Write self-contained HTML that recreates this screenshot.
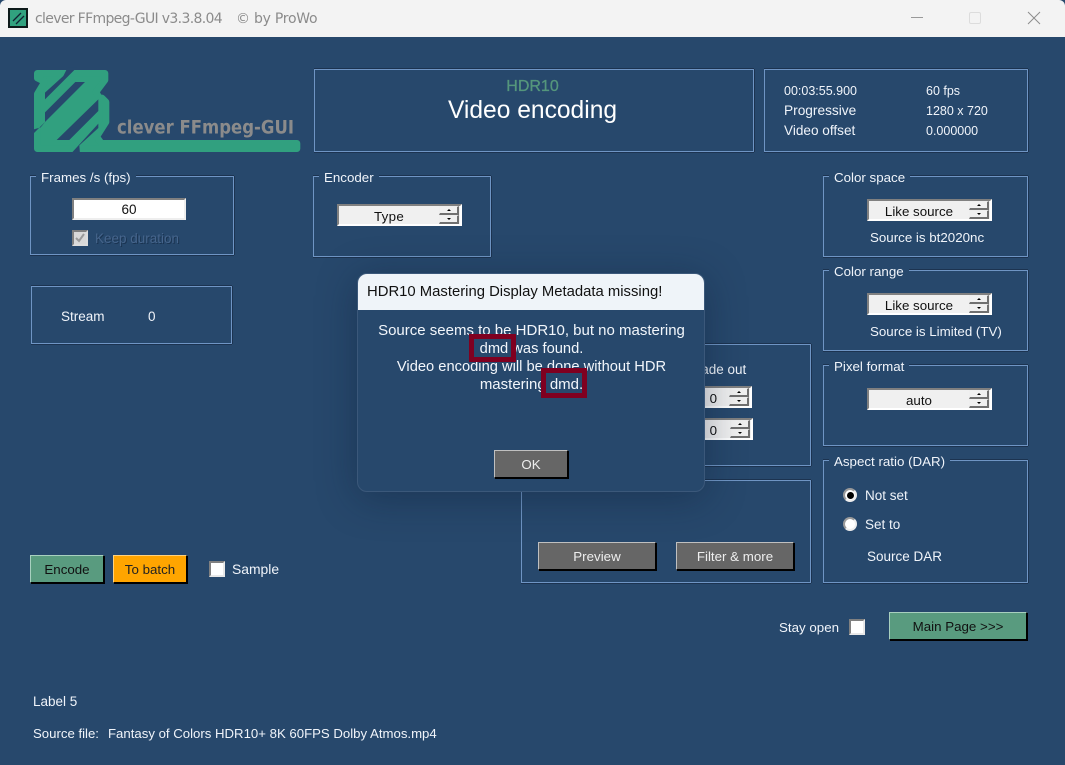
<!DOCTYPE html>
<html><head><meta charset="utf-8"><style>
*{box-sizing:border-box}
html,body{margin:0;padding:0;width:1065px;height:765px;overflow:hidden;background:#27486c}
body{position:relative;font-family:"Liberation Sans",sans-serif;font-size:13.5px;color:#f0f4fa}
.t{position:absolute;white-space:nowrap;line-height:16px}
.box{position:absolute;border:1px solid #6f95c4;box-shadow:0 -1px 0 #1c3350,1px 0 0 #1c3350,0 1px 0 #1c3350}
.leg{position:absolute;background:#27486c;padding:0 5px;line-height:16px;white-space:nowrap;top:-7px;left:5px;z-index:2;font-size:13.33px}
.spin{position:absolute;width:125px;height:22px;background:#f0f0f0;border:2px solid;border-color:#808080 #fff #fff #808080;color:#111;text-align:center;line-height:22px;padding-right:21px;font-size:13.33px}
.spin i{position:absolute;right:1px;width:20px;height:9px;background:#f0f0f0;border:1px solid;border-color:#eee #707070 #707070 #eee;border-right-width:2px;border-bottom-width:2px}
.spin i:after{content:"";position:absolute;left:7px;top:2px;border-left:2px solid transparent;border-right:2px solid transparent}
.spin i.u{top:0}.spin i.u:after{border-bottom:2px solid #000}
.spin i.d{top:9px}.spin i.d:after{border-top:2px solid #000}
.btn{position:absolute;height:28px;text-align:center;line-height:27px;border:1px solid;border-color:#c0c0c0 #000 #000 #c0c0c0;box-shadow:1px 1px 0 #000;background:#666;color:#eee;font-size:13.33px}
.btn.g{background:#599b7f;color:#111;border-color:#a8d0bf #000 #000 #a8d0bf}
.btn.o{background:#ffa500;color:#222;border-color:#ffd27f #000 #000 #ffd27f}
.chk{position:absolute;width:16px;height:16px;background:#fff;border:2px solid;border-color:#808080 #e8e8e8 #e8e8e8 #808080}
.rad{position:absolute;width:14px;height:14px;border-radius:50%;background:#fff;border:2px solid #999;border-right-color:#eee;border-bottom-color:#eee}
.red{position:absolute;border:5px solid #7f0020;z-index:30}
</style></head><body>

<!-- title bar -->
<div style="position:absolute;left:0;top:0;width:1065px;height:37px;background:#f3f3f3;border-radius:6px 6px 0 0"></div>
<svg style="position:absolute;left:8px;top:8px" width="20" height="20" viewBox="0 0 20 20">
<rect width="20" height="20" fill="#0d1a1a"/><rect x="2" y="2" width="16" height="16" fill="#31a27f"/>
<path d="M5 13L13 5M8 16L16 8" stroke="#123" stroke-width="1.3"/></svg>
<div class="t" style="left:35px;top:11px;font-size:14px;color:#8b8b8b;font-family:'DejaVu Sans',sans-serif;letter-spacing:-.66px">clever FFmpeg-GUI v3.3.8.04</div>
<div class="t" style="left:236px;top:11px;font-size:14px;color:#8b8b8b;font-family:'DejaVu Sans',sans-serif;letter-spacing:-.25px">© by ProWo</div>
<svg style="position:absolute;left:900px;top:5px" width="150" height="26" viewBox="0 0 150 26">
<path d="M11 12.5H23" stroke="#999" stroke-width="1"/>
<rect x="69.5" y="7.5" width="11" height="11" rx="1.5" fill="none" stroke="#dcdcdc"/>
<path d="M128 7L140 19M140 7L128 19" stroke="#8c8c8c" stroke-width="1"/></svg>

<!-- logo -->
<svg style="position:absolute;left:0;top:0" width="320" height="165" viewBox="0 0 320 165">
<g transform="translate(30 66) scale(.3333)">
<path d="M22 22H225V42L198 78L208 96H216L228 108V168L200 212L214 232H801V248H22V84L44 47L22 36Z" fill="#31a07f" stroke="#31a07f" stroke-width="20" stroke-linejoin="round"/>
<path d="M113 4H141L45 100V80L100 30Z" fill="#27486c"/>
<path d="M136 48H165L5 208V192L32 184L45 168V139Z" fill="#27486c"/>
<path d="M80 222H118L205 135V100Z" fill="#27486c"/>
<path d="M122 264H150L148 238L205 186V173Z" fill="#27486c"/>
</g>
<text x="117" y="133.5" font-family="'DejaVu Sans',sans-serif" font-weight="bold" font-size="19" fill="#8b8b8b" textLength="177" lengthAdjust="spacingAndGlyphs">clever FFmpeg-GUI</text>
</svg>

<!-- header panels -->
<div class="box" style="left:314px;top:69px;width:440px;height:83px"></div>
<div class="t" style="left:314px;width:437px;text-align:center;top:79px;font-size:16px;color:#55967c;-webkit-text-stroke:.3px #55967c">HDR10</div>
<div class="t" style="left:314px;width:437px;text-align:center;top:98px;font-size:24.6px;line-height:26px;color:#fff">Video encoding</div>

<div class="box" style="left:764px;top:69px;width:264px;height:83px"></div>
<div class="t" style="left:784px;top:83px;font-size:12.5px">00:03:55.900</div>
<div class="t" style="left:926px;top:83px;font-size:12.5px">60 fps</div>
<div class="t" style="left:784px;top:103px;font-size:13.7px">Progressive</div>
<div class="t" style="left:926px;top:103px;font-size:12.5px">1280 x 720</div>
<div class="t" style="left:784px;top:123px;font-size:13.6px">Video offset</div>
<div class="t" style="left:926px;top:123px;font-size:12.5px">0.000000</div>

<!-- Frames -->
<div class="box" style="left:30px;top:176px;width:204px;height:79px"><span class="leg">Frames /s (fps)</span></div>
<div style="position:absolute;left:72px;top:198px;width:114px;height:22px;background:#fff;border:2px solid;border-color:#808080 #eee #eee #808080;color:#111;text-align:center;line-height:19px">60</div>
<div class="chk" style="left:72px;top:230px;background:#d9d9d9;border-color:#808080 #ddd #ddd #808080"></div>
<svg style="position:absolute;left:72px;top:230px" width="16" height="16"><path d="M4 8l3 3 5-7" fill="none" stroke="#9a9a9a" stroke-width="2"/></svg>
<div class="t" style="left:95px;top:231px;color:#46658c;text-shadow:1px 1px 0 #1a3350">Keep duration</div>

<!-- Encoder -->
<div class="box" style="left:313px;top:176px;width:178px;height:81px"><span class="leg">Encoder</span></div>
<div class="spin" style="left:337px;top:204px;letter-spacing:.3px">Type<i class="u"></i><i class="d"></i></div>

<!-- Stream -->
<div class="box" style="left:31px;top:286px;width:201px;height:58px"></div>
<div class="t" style="left:61px;top:309px">Stream</div>
<div class="t" style="left:148px;top:309px">0</div>

<!-- Right column -->
<div class="box" style="left:823px;top:176px;width:205px;height:81px"><span class="leg">Color space</span></div>
<div class="spin" style="left:867px;top:199px">Like source<i class="u"></i><i class="d"></i></div>
<div class="t" style="left:870px;top:230px;font-size:13.33px">Source is bt2020nc</div>

<div class="box" style="left:823px;top:270px;width:205px;height:81px"><span class="leg">Color range</span></div>
<div class="spin" style="left:867px;top:293px">Like source<i class="u"></i><i class="d"></i></div>
<div class="t" style="left:870px;top:324px;font-size:13.33px">Source is Limited (TV)</div>

<div class="box" style="left:823px;top:365px;width:205px;height:81px"><span class="leg">Pixel format</span></div>
<div class="spin" style="left:867px;top:388px">auto<i class="u"></i><i class="d"></i></div>

<div class="box" style="left:823px;top:460px;width:205px;height:123px"><span class="leg">Aspect ratio (DAR)</span></div>
<div class="rad" style="left:843px;top:488px"></div>
<div style="position:absolute;left:847px;top:492px;width:7px;height:7px;border-radius:50%;background:#000"></div>
<div class="t" style="left:865px;top:488px">Not set</div>
<div class="rad" style="left:843px;top:517px"></div>
<div class="t" style="left:865px;top:517px">Set to</div>
<div class="t" style="left:867px;top:549px">Source DAR</div>

<!-- Middle panels behind dialog -->
<div class="box" style="left:520px;top:344px;width:291px;height:122px"></div>
<div class="t" style="left:693px;top:362px">Fade out</div>
<div class="spin" style="left:640px;top:386px;width:112px;text-align:right;padding-right:33px">0<i class="u"></i><i class="d"></i></div>
<div class="spin" style="left:640px;top:418px;width:113px;text-align:right;padding-right:34px">0<i class="u"></i><i class="d"></i></div>
<div class="box" style="left:521px;top:480px;width:290px;height:103px"></div>
<div class="btn" style="left:538px;top:542px;width:118px">Preview</div>
<div class="btn" style="left:676px;top:542px;width:118px">Filter &amp; more</div>

<!-- bottom-left -->
<div class="btn g" style="left:30px;top:555px;width:74px">Encode</div>
<div class="btn o" style="left:113px;top:555px;width:74px">To batch</div>
<div class="chk" style="left:209px;top:561px"></div>
<div class="t" style="left:232px;top:561px;font-size:13.9px">Sample</div>

<div class="t" style="left:779px;top:620px;font-size:13.33px">Stay open</div>
<div class="chk" style="left:849px;top:619px"></div>
<div class="btn g" style="left:889px;top:612px;width:138px">Main Page &gt;&gt;&gt;</div>

<div class="t" style="left:33px;top:694px">Label 5</div>
<div class="t" style="left:33px;top:726px;font-size:13.2px">Source file:</div>
<div class="t" style="left:108px;top:726px;font-size:13.2px">Fantasy of Colors HDR10+ 8K 60FPS Dolby Atmos.mp4</div>

<!-- dialog -->
<div style="position:absolute;left:357px;top:273px;width:348px;height:219px;background:#27486c;border:1px solid #3b587a;border-radius:10px;box-shadow:0 6px 40px rgba(10,25,50,.38);z-index:20;overflow:hidden">
<div style="position:absolute;left:0;top:0;right:0;height:36px;background:#eff4f9"></div>
</div>
<div class="t" style="left:367px;top:284px;font-size:14.85px;color:#111;z-index:21">HDR10 Mastering Display Metadata missing!</div>
<div class="t" style="left:358px;width:347px;text-align:center;top:322px;font-size:15px;line-height:18px;z-index:21;color:#f2f6fb">Source seems to be HDR10, but no mastering<br><span style="font-size:14.7px">dmd was found.</span><br><span style="font-size:14.7px">Video encoding will be done without HDR</span><br>mastering dmd.</div>
<div class="btn" style="left:494px;top:450px;width:74px;z-index:21">OK</div>
<div class="red" style="left:469px;top:334px;width:47px;height:28px"></div>
<div class="red" style="left:541px;top:368px;width:46px;height:30px"></div>

</body></html>
